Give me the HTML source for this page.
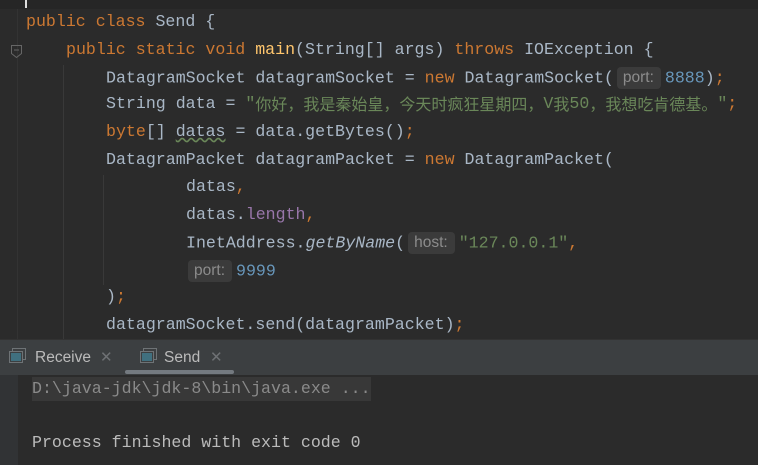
<!DOCTYPE html>
<html><head><meta charset="utf-8"><style>
*{margin:0;padding:0;box-sizing:border-box}
body{width:758px;height:465px;overflow:hidden;background:#2b2b2b;position:relative;font-family:"Liberation Mono",monospace;font-size:16.6px;color:#a9b7c6}
.l{position:absolute;white-space:pre;line-height:20px;height:20px}
.k{color:#cc7832}.s{color:#6a8759}.n{color:#6897bb}.m{color:#ffc66d}.f{color:#9876aa}.i{font-style:italic}
.c{font-family:"Noto Sans CJK SC",sans-serif;font-size:16px;line-height:16px;vertical-align:top;position:relative;top:1px}
.h{display:inline-block;background:#3b3b3b;color:#8c8c8c;font-family:"Liberation Sans",sans-serif;font-size:15.5px;border-radius:4px;padding:0 7px 0 6px;line-height:21px;height:22px;vertical-align:middle;margin:0 4px 0 3px}
.vg{position:absolute;width:1px;background:#393939}
</style></head><body>
<div style="position:absolute;left:0;top:0;width:758px;height:9px;background:#262626"></div>
<div style="position:absolute;left:25px;top:0;width:2px;height:8px;background:#ddd"></div>
<div class="vg" style="left:17px;top:9px;height:331px;background:#333"></div>
<div class="vg" style="left:63px;top:65px;height:275px"></div>
<div class="vg" style="left:103px;top:175px;height:110px"></div>
<svg style="position:absolute;left:10px;top:44px" width="14" height="16"><path d="M1.5 1.5h10v8l-5 4-5-4z" fill="none" stroke="#666" stroke-width="1"/><path d="M4 6h5" stroke="#666"/></svg>
<div class="l" style="left:26px;top:12px"><span class="k">public class </span>Send {</div>
<div class="l" style="left:66px;top:40px"><span class="k">public static void </span><span class="m">main</span>(String[] args) <span class="k">throws </span>IOException {</div>
<div class="l" style="left:106px;top:67px">DatagramSocket datagramSocket = <span class="k">new </span>DatagramSocket(<span class="h">port:</span><span class="n">8888</span>)<span class="k">;</span></div>
<div class="l" style="left:106px;top:94px">String data = <span class="s">"<span class="c">你好，我是秦始皇，今天时疯狂星期四，</span>V<span class="c">我</span>50<span class="c">，我想吃肯德基。</span>"</span><span class="k">;</span></div>
<div class="l" style="left:106px;top:122px"><span class="k">byte</span>[] <span style="text-decoration:underline wavy #6a8759">datas</span> = data.getBytes()<span class="k">;</span></div>
<div class="l" style="left:106px;top:150px">DatagramPacket datagramPacket = <span class="k">new </span>DatagramPacket(</div>
<div class="l" style="left:186px;top:177px">datas<span class="k">,</span></div>
<div class="l" style="left:186px;top:205px">datas.<span class="f">length</span><span class="k">,</span></div>
<div class="l" style="left:186px;top:232px">InetAddress.<span class="i">getByName</span>(<span class="h">host:</span><span class="s">"127.0.0.1"</span><span class="k">,</span></div>
<div class="l" style="left:186px;top:260px"><span class="h" style="margin-left:2px">port:</span><span class="n">9999</span></div>
<div class="l" style="left:106px;top:287px">)<span class="k">;</span></div>
<div class="l" style="left:106px;top:315px">datagramSocket.send(datagramPacket)<span class="k">;</span></div>
<div style="position:absolute;left:0;top:339px;width:758px;height:36px;background:#3c3f41;border-top:1px solid #323232"></div>
<svg style="position:absolute;left:9px;top:348px" width="18" height="16"><rect x="3.5" y="0.5" width="13" height="11" fill="none" stroke="#6e7376"/><rect x="0.5" y="3.5" width="13" height="11" fill="#3c3f41" stroke="#6e7376"/><rect x="2" y="5" width="10" height="8" fill="#40707f"/></svg>
<div class="l" style="left:35px;top:348px;font-family:'Liberation Sans',sans-serif;font-size:15.5px;color:#bbbbbb">Receive</div>
<div class="l" style="left:100px;top:348px;font-family:'Liberation Sans',sans-serif;font-size:15px;color:#6e7174">✕</div>
<svg style="position:absolute;left:140px;top:348px" width="18" height="16"><rect x="3.5" y="0.5" width="13" height="11" fill="none" stroke="#6e7376"/><rect x="0.5" y="3.5" width="13" height="11" fill="#3c3f41" stroke="#6e7376"/><rect x="2" y="5" width="10" height="8" fill="#40707f"/></svg>
<div class="l" style="left:164px;top:348px;font-family:'Liberation Sans',sans-serif;font-size:15.5px;color:#bbbbbb">Send</div>
<div class="l" style="left:210px;top:348px;font-family:'Liberation Sans',sans-serif;font-size:15px;color:#6e7174">✕</div>
<div style="position:absolute;left:125px;top:370px;width:109px;height:4px;border-radius:2px;background:#747a80"></div>
<div style="position:absolute;left:0;top:375px;width:18px;height:90px;background:#313335"></div>
<div style="position:absolute;left:32px;top:377px;width:339px;height:24px;background:#383838"></div>
<div class="l" style="left:32px;top:379px;color:#8a8a8a">D:\java-jdk\jdk-8\bin\java.exe ...</div>
<div class="l" style="left:32px;top:433px;color:#bbbbbb">Process finished with exit code 0</div>
</body></html>
